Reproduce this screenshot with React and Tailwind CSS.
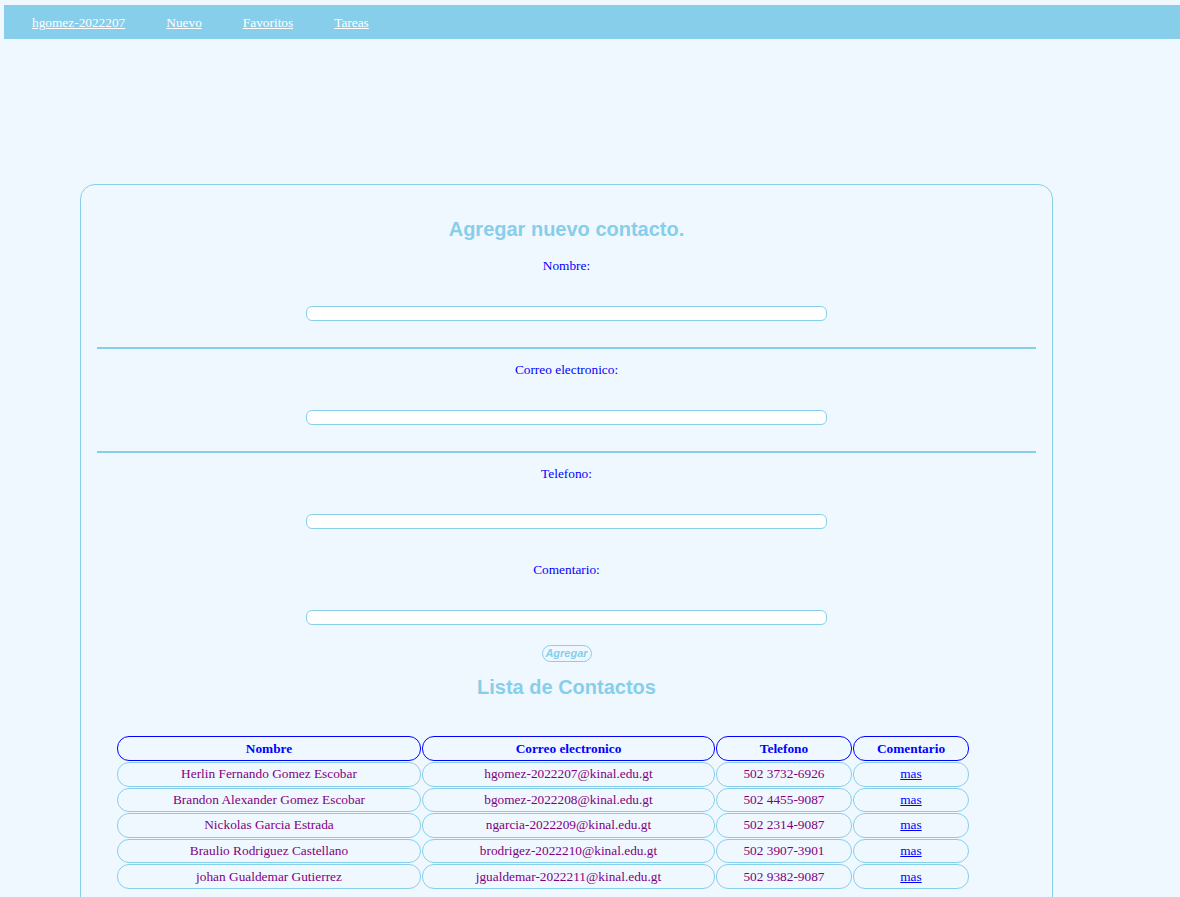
import React from "react";

const contactos = [
  { nombre: "Herlin Fernando Gomez Escobar", correo: "hgomez-2022207@kinal.edu.gt", telefono: "502 3732-6926" },
  { nombre: "Brandon Alexander Gomez Escobar", correo: "bgomez-2022208@kinal.edu.gt", telefono: "502 4455-9087" },
  { nombre: "Nickolas Garcia Estrada", correo: "ngarcia-2022209@kinal.edu.gt", telefono: "502 2314-9087" },
  { nombre: "Braulio Rodriguez Castellano", correo: "brodrigez-2022210@kinal.edu.gt", telefono: "502 3907-3901" },
  { nombre: "johan Gualdemar Gutierrez", correo: "jgualdemar-2022211@kinal.edu.gt", telefono: "502 9382-9087" },
];

const Campo = ({ label, first }) => (
  <>
    <p className={`${first ? "mt-[17px]" : ""} text-center text-[13.33px] leading-[15px] text-[#0000ff]`}>{label}</p>
    <input
      type="text"
      className="mx-auto mt-[33px] block h-[15px] w-[521px] rounded-[6px] border border-[#87ceeb] bg-white outline-none"
    />
  </>
);

export default function App() {
  return (
    <div className="min-h-[897px] bg-[#f0f8ff] pt-[5px] font-['Liberation_Serif',serif] text-[13.33px]">
      {/* Barra de navegacion */}
      <nav className="ml-[4px] flex h-[34px] items-center gap-[41px] bg-[#87ceeb] pl-[28px] leading-[15px]">
        <a href="#" className="text-white underline">hgomez-2022207</a>
        <a href="#" className="text-white underline">Nuevo</a>
        <a href="#" className="text-white underline">Favoritos</a>
        <a href="#" className="text-white underline">Tareas</a>
      </nav>

      {/* Tarjeta del formulario */}
      <div className="ml-[80px] mt-[145px] w-[973px] rounded-[15px] border border-[#87ceeb] px-[16px] pb-[40px] pt-[33px]">
        <h2 className="text-center font-['Liberation_Sans',sans-serif] text-[20px] font-bold leading-[23px] text-[#87ceeb]">
          Agregar nuevo contacto.
        </h2>

        <Campo label="Nombre:" first />
        <hr className="mt-[26px] border-0 border-t-2 border-[#87ceeb]" />
        <div className="mt-[13px]">
          <Campo label="Correo electronico:" />
        </div>
        <hr className="mt-[26px] border-0 border-t-2 border-[#87ceeb]" />
        <div className="mt-[13px]">
          <Campo label="Telefono:" />
        </div>
        <div className="mt-[33px]">
          <Campo label="Comentario:" />
        </div>

        <div className="mt-[20px] flex justify-center">
          <button className="h-[17px] w-[50px] rounded-full border border-[#87ceeb] font-['Liberation_Sans',sans-serif] text-[11px] font-bold italic leading-[15px] text-[#87ceeb]">
            Agregar
          </button>
        </div>

        <h2 className="mt-[14px] text-center font-['Liberation_Sans',sans-serif] text-[20px] font-bold leading-[23px] text-[#87ceeb]">
          Lista de Contactos
        </h2>

        {/* Tabla de contactos */}
        <table className="ml-[20px] mt-[36px] -translate-x-[1px] border-separate border-spacing-x-[1px] border-spacing-y-[1px] text-center">
          <thead>
            <tr className="h-[25px] text-[#0000ff]">
              <th className="w-[304px] rounded-[12px] border border-[#0000ff] p-0 font-bold">Nombre</th>
              <th className="w-[293px] rounded-[12px] border border-[#0000ff] p-0 font-bold">Correo electronico</th>
              <th className="w-[136px] rounded-[12px] border border-[#0000ff] p-0 font-bold">Telefono</th>
              <th className="w-[116px] rounded-[12px] border border-[#0000ff] p-0 font-bold">Comentario</th>
            </tr>
          </thead>
          <tbody>
            {contactos.map((c) => (
              <tr key={c.correo} className="h-[24.6px] text-[#800080]">
                <td className="rounded-[12px] border border-[#87ceeb] p-0">{c.nombre}</td>
                <td className="rounded-[12px] border border-[#87ceeb] p-0">{c.correo}</td>
                <td className="rounded-[12px] border border-[#87ceeb] p-0">{c.telefono}</td>
                <td className="rounded-[12px] border border-[#87ceeb] p-0">
                  <a href="#" className="text-[#0000ff] underline">mas</a>
                </td>
              </tr>
            ))}
          </tbody>
        </table>
      </div>
    </div>
  );
}
